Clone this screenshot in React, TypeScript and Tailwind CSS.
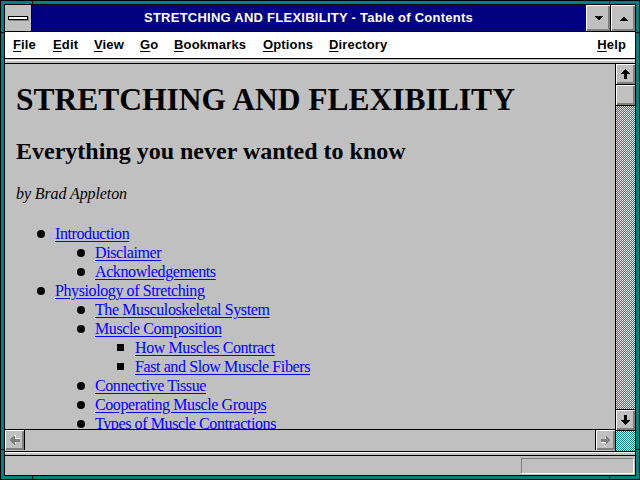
import React from "react";

type Entry = { title: string; children?: Entry[] };

const toc: Entry[] = [
  {
    title: "Introduction",
    children: [{ title: "Disclaimer" }, { title: "Acknowledgements" }],
  },
  {
    title: "Physiology of Stretching",
    children: [
      { title: "The Musculoskeletal System" },
      {
        title: "Muscle Composition",
        children: [{ title: "How Muscles Contract" }, { title: "Fast and Slow Muscle Fibers" }],
      },
      { title: "Connective Tissue" },
      { title: "Cooperating Muscle Groups" },
      { title: "Types of Muscle Contractions" },
    ],
  },
];

const menus = [
  { key: "F", rest: "ile", w: "w-[40px]" },
  { key: "E", rest: "dit", w: "w-[41px]" },
  { key: "V", rest: "iew", w: "w-[46px]" },
  { key: "G", rest: "o", w: "w-[34px]" },
  { key: "B", rest: "ookmarks", w: "w-[89px]" },
  { key: "O", rest: "ptions", w: "w-[66px]" },
  { key: "D", rest: "irectory", w: "w-auto" },
];

// raised 3d face used by every Win 3.1 button
const face =
  "bg-[#c0c0c0] shadow-[inset_1px_1px_0_#ffffff,inset_-1px_-1px_0_#808080,inset_-2px_-2px_0_#808080]";

// teal/white checker of the scrollbar track
function Dither({ className }: { className: string }) {
  return (
    <div className={`overflow-hidden ${className}`}>
      <svg width="100%" height="100%" shapeRendering="crispEdges">
        <defs>
          <pattern id="dith" width="2" height="2" patternUnits="userSpaceOnUse">
            <rect width="2" height="2" fill="#ffffff" />
            <rect x="1" y="0" width="1" height="1" fill="#008080" />
            <rect x="0" y="1" width="1" height="1" fill="#008080" />
          </pattern>
        </defs>
        <rect width="100%" height="100%" fill="url(#dith)" />
      </svg>
    </div>
  );
}

function Arrow({ dir, disabled }: { dir: "up" | "down" | "left" | "right"; disabled?: boolean }) {
  const rot = { up: 0, right: 90, down: 180, left: 270 }[dir];
  const pts = "4.5,0 9,5 6,5 6,10 3,10 3,5 0,5";
  return (
    <svg width="10" height="11" viewBox="0 0 10 11" shapeRendering="crispEdges">
      <g transform={`rotate(${rot} 4.5 5)`}>
        {disabled && <polygon points={pts} fill="#ffffff" transform="translate(1 1)" />}
        <polygon points={pts} fill={disabled ? "#808080" : "#000000"} />
      </g>
    </svg>
  );
}

function TocList({ items, level }: { items: Entry[]; level: number }) {
  return (
    <ul className={level === 1 ? "pl-[39px]" : "pl-[40px]"}>
      {items.map((it) => (
        <li key={it.title}>
          <div className="flex h-[19px] items-center">
            {level < 3 ? (
              <span className="-ml-[18px] mr-[10px] size-[8px] shrink-0 rounded-full bg-black" />
            ) : (
              <span className="-ml-[18px] mr-[11px] size-[7px] shrink-0 bg-black" />
            )}
            <a
              href="#"
              className="whitespace-nowrap tracking-[-0.4px] text-[#0000ff] underline underline-offset-[2px]"
            >
              {it.title}
            </a>
          </div>
          {it.children && <TocList items={it.children} level={level + 1} />}
        </li>
      ))}
    </ul>
  );
}

function Mark({ className }: { className: string }) {
  return <div className={`absolute bg-black ${className}`} />;
}

export default function App() {
  return (
    <div className="relative h-[480px] w-[640px] border border-black bg-[#008080] p-[3px] font-['Liberation_Sans',Arial,sans-serif]">
      {/* resize corner marks on the frame */}
      <Mark className="left-[31px] top-0 h-[4px] w-[1px]" />
      <Mark className="left-[608px] top-0 h-[4px] w-[1px]" />
      <Mark className="bottom-0 left-[31px] h-[4px] w-[1px]" />
      <Mark className="bottom-0 left-[608px] h-[4px] w-[1px]" />
      <Mark className="left-0 top-[31px] h-[1px] w-[4px]" />
      <Mark className="right-0 top-[31px] h-[1px] w-[4px]" />
      <Mark className="left-0 top-[448px] h-[1px] w-[4px]" />
      <Mark className="right-0 top-[448px] h-[1px] w-[4px]" />

      <div className="flex h-full flex-col border border-black bg-[#c0c0c0]">
        {/* Title bar */}
        <div className="flex h-[27px] shrink-0 border-b border-black">
          <div className="flex w-[27px] items-center justify-center border-r border-black bg-[#c0c0c0]">
            <div className="h-[4px] w-[20px] border border-black bg-white shadow-[1px_1px_0_#808080]" />
          </div>
          <div className="flex flex-1 items-center justify-center bg-[#000080] text-[13px] font-bold tracking-[0.25px] text-white">
            STRETCHING AND FLEXIBILITY - Table of Contents
          </div>
          <div className={`flex w-[25px] items-center justify-center border-l border-black ${face}`}>
            <svg width="9" height="5" viewBox="0 0 9 5" shapeRendering="crispEdges">
              <polygon points="0,0 9,0 4.5,4.5" fill="#000" />
            </svg>
          </div>
          <div className={`flex w-[25px] items-center justify-center border-l border-black ${face}`}>
            <svg width="9" height="5" viewBox="0 0 9 5" shapeRendering="crispEdges">
              <polygon points="0,5 9,5 4.5,0.5" fill="#000" />
            </svg>
          </div>
        </div>

        {/* Menu bar */}
        <div className="flex h-[26px] shrink-0 items-center bg-white pl-[8px] pr-[9px] text-[13px] font-bold tracking-[0.15px] text-black">
          {menus.map((m) => (
            <span key={m.key} className={m.w}>
              <span className="underline underline-offset-[2px]">{m.key}</span>
              {m.rest}
            </span>
          ))}
          <span className="ml-auto">
            <span className="underline underline-offset-[2px]">H</span>elp
          </span>
        </div>

        {/* collapsed toolbar strip */}
        <div className="h-[6px] shrink-0 border-y border-black bg-[#c0c0c0]">
          <div className="mt-[1px] h-[1px] bg-white" />
        </div>

        {/* Document + scrollbars */}
        <div className="flex h-[387px] shrink-0">
          <div className="flex flex-1 flex-col">
            <div className="h-[366px] overflow-hidden border-b border-black bg-[#c0c0c0] px-[11px] font-['Liberation_Serif','Times_New_Roman',serif] text-black">
              <h1 className="mt-[17px] whitespace-nowrap text-[31.5px] font-bold leading-[37px]">
                STRETCHING AND FLEXIBILITY
              </h1>
              <h2 className="mt-[19px] whitespace-nowrap text-[24px] font-bold leading-[28px]">
                Everything you never wanted to know
              </h2>
              <p className="mt-[19px] text-[16px] italic leading-[19px] tracking-[-0.1px]">by Brad Appleton</p>
              <div className="mt-[21px] text-[16px] leading-[19px]">
                <TocList items={toc} level={1} />
              </div>
            </div>
            <div className="flex h-[20px] bg-[#c0c0c0]">
              <div className={`flex w-[20px] items-center justify-center border-r border-black ${face}`}>
                <Arrow dir="left" disabled />
              </div>
              <div className="flex-1" />
              <div className={`flex w-[20px] items-center justify-center border-l border-black ${face}`}>
                <Arrow dir="right" disabled />
              </div>
            </div>
          </div>

          <div className="flex w-[20px] flex-col border-l border-black">
            <div className={`flex h-[21px] items-center justify-center border-b border-black ${face}`}>
              <Arrow dir="up" />
            </div>
            <div className={`h-[21px] border-b border-black ${face}`} />
            <Dither className="flex-1" />
            <div className={`flex h-[22px] items-center justify-center border-y border-black ${face}`}>
              <Arrow dir="down" />
            </div>
            <Dither className="h-[20px]" />
          </div>
        </div>

        {/* separator */}
        <div className="h-[5px] shrink-0 border-y border-black bg-[#c0c0c0]">
          <div className="h-[1px] bg-white" />
        </div>

        {/* Status bar */}
        <div className="flex flex-1 items-center justify-end pr-[1px]">
          <div className="h-[16px] w-[113px] border border-b-white border-l-[#808080] border-r-white border-t-[#808080]" />
        </div>
      </div>
    </div>
  );
}
